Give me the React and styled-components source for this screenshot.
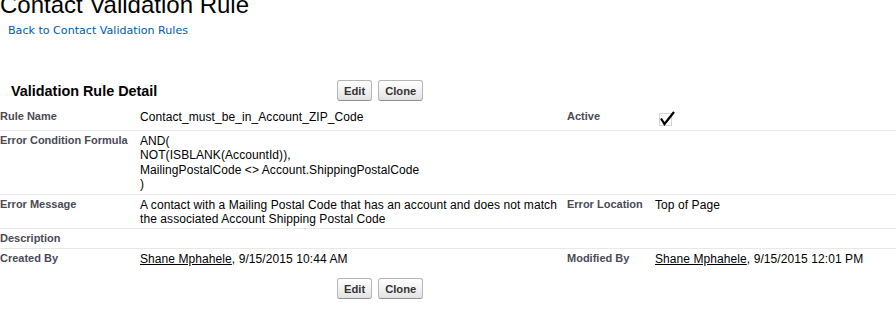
import styled, { createGlobalStyle } from "styled-components";

const Global = createGlobalStyle`
  html, body {
    margin: 0;
    padding: 0;
    background: #fff;
    overflow: hidden;
  }
  body {
    font-family: "Liberation Sans", Arial, sans-serif;
    color: #000;
  }
`;

const Page = styled.div`
  width: 896px;
`;

const Title = styled.h1`
  margin: -7px 0 0;
  font-size: 24px;
  line-height: 24px;
  font-weight: normal;
  color: #000;
`;

const Nav = styled.div`
  padding: 7px 0 0 8px;
  font-family: "DejaVu Sans", Verdana, sans-serif;
  font-size: 11.1px;
  line-height: 13px;
`;

const BackLink = styled.a`
  color: #015ba7;
  text-decoration: none;
`;

// block header: title + buttons
const Header = styled.div`
  display: grid;
  grid-template-columns: 337px auto;
  align-items: center;
  margin-top: ${(p) => p.top}px;
`;

const BlockTitle = styled.h2`
  margin: 0;
  padding-left: 11px;
  font-size: 14.4px;
  font-weight: bold;
  color: #000;
`;

const Buttons = styled.div`
  display: flex;
  gap: 6px;
  padding-left: ${(p) => p.indent || 0}px;
  margin-top: ${(p) => p.top || 0}px;
`;

const Button = styled.button`
  height: 21px;
  padding: 0 6px;
  border: 1px solid #b5b5b5;
  border-bottom-color: #8f8f8f;
  border-radius: 3px;
  background: linear-gradient(#ffffff, #f1f1f1 55%, #e2e2e2);
  color: #333;
  font-family: "Liberation Sans", Arial, sans-serif;
  font-size: 11.2px;
  font-weight: bold;
  cursor: pointer;
`;

const Table = styled.div`
  margin-top: 6px;
`;

const Row = styled.div`
  display: grid;
  grid-template-columns: 140px 427px 88px 1fr;
  border-bottom: ${(p) => (p.last ? "none" : "1px solid #e8e8e8")};
`;

const Label = styled.div`
  padding: 3px 0 2px;
  font-size: 11px;
  line-height: 13.2px;
  font-weight: bold;
  color: #4a4a56;
`;

const Value = styled.div`
  padding: 3px 6px 2px 0;
  font-size: 12px;
  line-height: 14.4px;
  letter-spacing: 0.08px;
  white-space: pre-line;
`;

const UserLink = styled.a`
  color: #000;
  text-decoration: underline;
`;

const CheckIcon = styled.svg`
  display: block;
  margin-bottom: 2px;
`;

const Checked = () => (
  <CheckIcon width="21" height="16" viewBox="0 0 21 16">
    <rect x="4.5" y="3.5" width="12" height="12" fill="none" stroke="#a8a8a8" strokeDasharray="1 1" />
    <path d="M6 8.5 L9.5 14 L19 2" fill="none" stroke="#000" strokeWidth="2.2" strokeLinejoin="miter" />
  </CheckIcon>
);

const formula = `AND(
NOT(ISBLANK(AccountId)),
MailingPostalCode <> Account.ShippingPostalCode
)`;

export default function App() {
  return (
    <Page>
      <Global />
      <Title>Contact Validation Rule</Title>
      <Nav>
        <BackLink href="#">Back to Contact Validation Rules</BackLink>
      </Nav>

      <Header top={43}>
        <BlockTitle>Validation Rule Detail</BlockTitle>
        <Buttons>
          <Button>Edit</Button>
          <Button>Clone</Button>
        </Buttons>
      </Header>

      <Table>
        <Row>
          <Label>Rule Name</Label>
          <Value>Contact_must_be_in_Account_ZIP_Code</Value>
          <Label>Active</Label>
          <Value>
            <Checked />
          </Value>
        </Row>
        <Row>
          <Label>Error Condition Formula</Label>
          <Value>{formula}</Value>
          <Label />
          <Value />
        </Row>
        <Row>
          <Label>Error Message</Label>
          <Value>
            A contact with a Mailing Postal Code that has an account and does not match the associated
            Account Shipping Postal Code
          </Value>
          <Label>Error Location</Label>
          <Value>Top of Page</Value>
        </Row>
        <Row>
          <Label>Description</Label>
          <Value />
          <Label />
          <Value />
        </Row>
        <Row last>
          <Label>Created By</Label>
          <Value>
            <UserLink href="#">Shane Mphahele</UserLink>, 9/15/2015 10:44 AM
          </Value>
          <Label>Modified By</Label>
          <Value>
            <UserLink href="#">Shane Mphahele</UserLink>, 9/15/2015 12:01 PM
          </Value>
        </Row>
      </Table>

      <Buttons indent={337} top={10}>
        <Button>Edit</Button>
        <Button>Clone</Button>
      </Buttons>
    </Page>
  );
}
